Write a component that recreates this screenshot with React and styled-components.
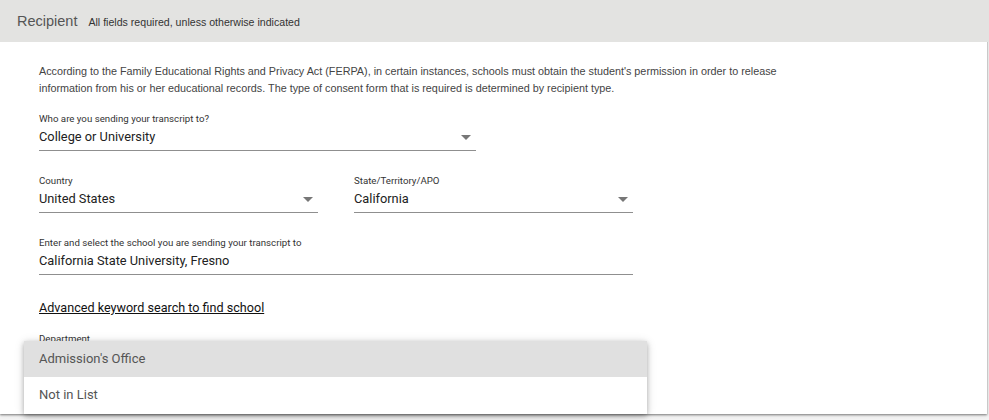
import React from "react";
import styled, { createGlobalStyle } from "styled-components";

const Global = createGlobalStyle`
  html, body { margin: 0; padding: 0; background: #fff; }
  body { font-family: "Liberation Sans", Arial, sans-serif; }
`;

const Page = styled.div`
  width: 989px;
  height: 420px;
  overflow: hidden;
  position: relative;
  background: #f3f3f3;
`;

const Card = styled.div`
  position: relative;
  width: 987px;
  height: 414px;
  background: #fff;
  box-shadow: 0 1px 2px rgba(0, 0, 0, 0.45), 0 2px 4px rgba(0, 0, 0, 0.08);
  display: flex;
  flex-direction: column;
`;

const Header = styled.div`
  height: 42px;
  background: #e3e3e1;
  display: flex;
  align-items: center;
  padding-left: 17px;
  gap: 11px;
  width: 989px;
  box-sizing: border-box;
`;

const Title = styled.span`
  font-size: 14.5px;
  color: #555;
`;

const Sub = styled.span`
  font-size: 10.6px;
  color: #333;
  padding-top: 2px;
`;

const Body = styled.div`
  padding: 21px 0 0 39px;
  display: flex;
  flex-direction: column;
`;

const Para = styled.p`
  margin: 0 0 16px;
  font-size: 10.8px;
  line-height: 17px;
  color: #444;
`;

const Row = styled.div`
  display: flex;
  gap: 36px;
  margin-bottom: 24px;
`;

const Field = styled.div`
  width: ${(p) => p.$w}px;
  display: flex;
  flex-direction: column;
  font-family: Roboto, "Liberation Sans", sans-serif;
`;

const Label = styled.div`
  font-size: 9.7px;
  line-height: 12px;
  color: #333;
  margin-bottom: 3px;
`;

const Control = styled.div`
  display: flex;
  align-items: center;
  justify-content: space-between;
  border-bottom: 1px solid #8f8f8f;
  padding-bottom: 4px;
  height: 18px;
`;

const Value = styled.span`
  font-size: 12.8px;
  line-height: 18px;
  color: #222;
`;

const Arrow = styled.span`
  width: 0;
  height: 0;
  border-left: 5px solid transparent;
  border-right: 5px solid transparent;
  border-top: 5px solid #777;
  margin-right: 5px;
  margin-top: 1px;
`;

const Link = styled.a`
  font-family: Roboto, "Liberation Sans", sans-serif;
  font-size: 12.6px;
  line-height: 18px;
  color: #111;
  text-decoration: underline;
  align-self: flex-start;
  margin-bottom: 16px;
`;

const Menu = styled.ul`
  position: absolute;
  left: 24px;
  top: 341px;
  width: 623px;
  margin: 0;
  padding: 0;
  list-style: none;
  background: #fff;
  box-shadow: 0 2px 5px rgba(0, 0, 0, 0.28), 0 1px 10px rgba(0, 0, 0, 0.12);
  font-family: Roboto, "Liberation Sans", sans-serif;
`;

const Item = styled.li`
  height: ${(p) => p.$h}px;
  box-sizing: border-box;
  display: flex;
  align-items: center;
  padding: 0 0 2px 15px;
  font-size: 13px;
  color: #555;
  background: ${(p) => (p.$active ? "#e0e0e0" : "#fff")};
`;

function Select({ label, value, w, arrow = true }) {
  return (
    <Field $w={w}>
      <Label>{label}</Label>
      <Control>
        <Value>{value}</Value>
        {arrow && <Arrow />}
      </Control>
    </Field>
  );
}

export default function App() {
  return (
    <Page>
      <Global />
      <Card>
        <Header>
          <Title>Recipient</Title>
          <Sub>All fields required, unless otherwise indicated</Sub>
        </Header>
        <Body>
          <Para>
            According to the Family Educational Rights and Privacy Act (FERPA), in certain instances, schools must obtain the student's permission in order to release
            <br />
            information from his or her educational records. The type of consent form that is required is determined by recipient type.
          </Para>
          <Row>
            <Select w={437} label="Who are you sending your transcript to?" value="College or University" />
          </Row>
          <Row>
            <Select w={279} label="Country" value="United States" />
            <Select w={279} label="State/Territory/APO" value="California" />
          </Row>
          <Row>
            <Select
              w={594}
              label="Enter and select the school you are sending your transcript to"
              value="California State University, Fresno"
              arrow={false}
            />
          </Row>
          <Link href="#">Advanced keyword search to find school</Link>
          <Row>
            <Select w={594} label="Department" value="Admission's Office" />
          </Row>
        </Body>
      </Card>
      <Menu>
        <Item $h={36} $active>Admission's Office</Item>
        <Item $h={37}>Not in List</Item>
      </Menu>
    </Page>
  );
}
